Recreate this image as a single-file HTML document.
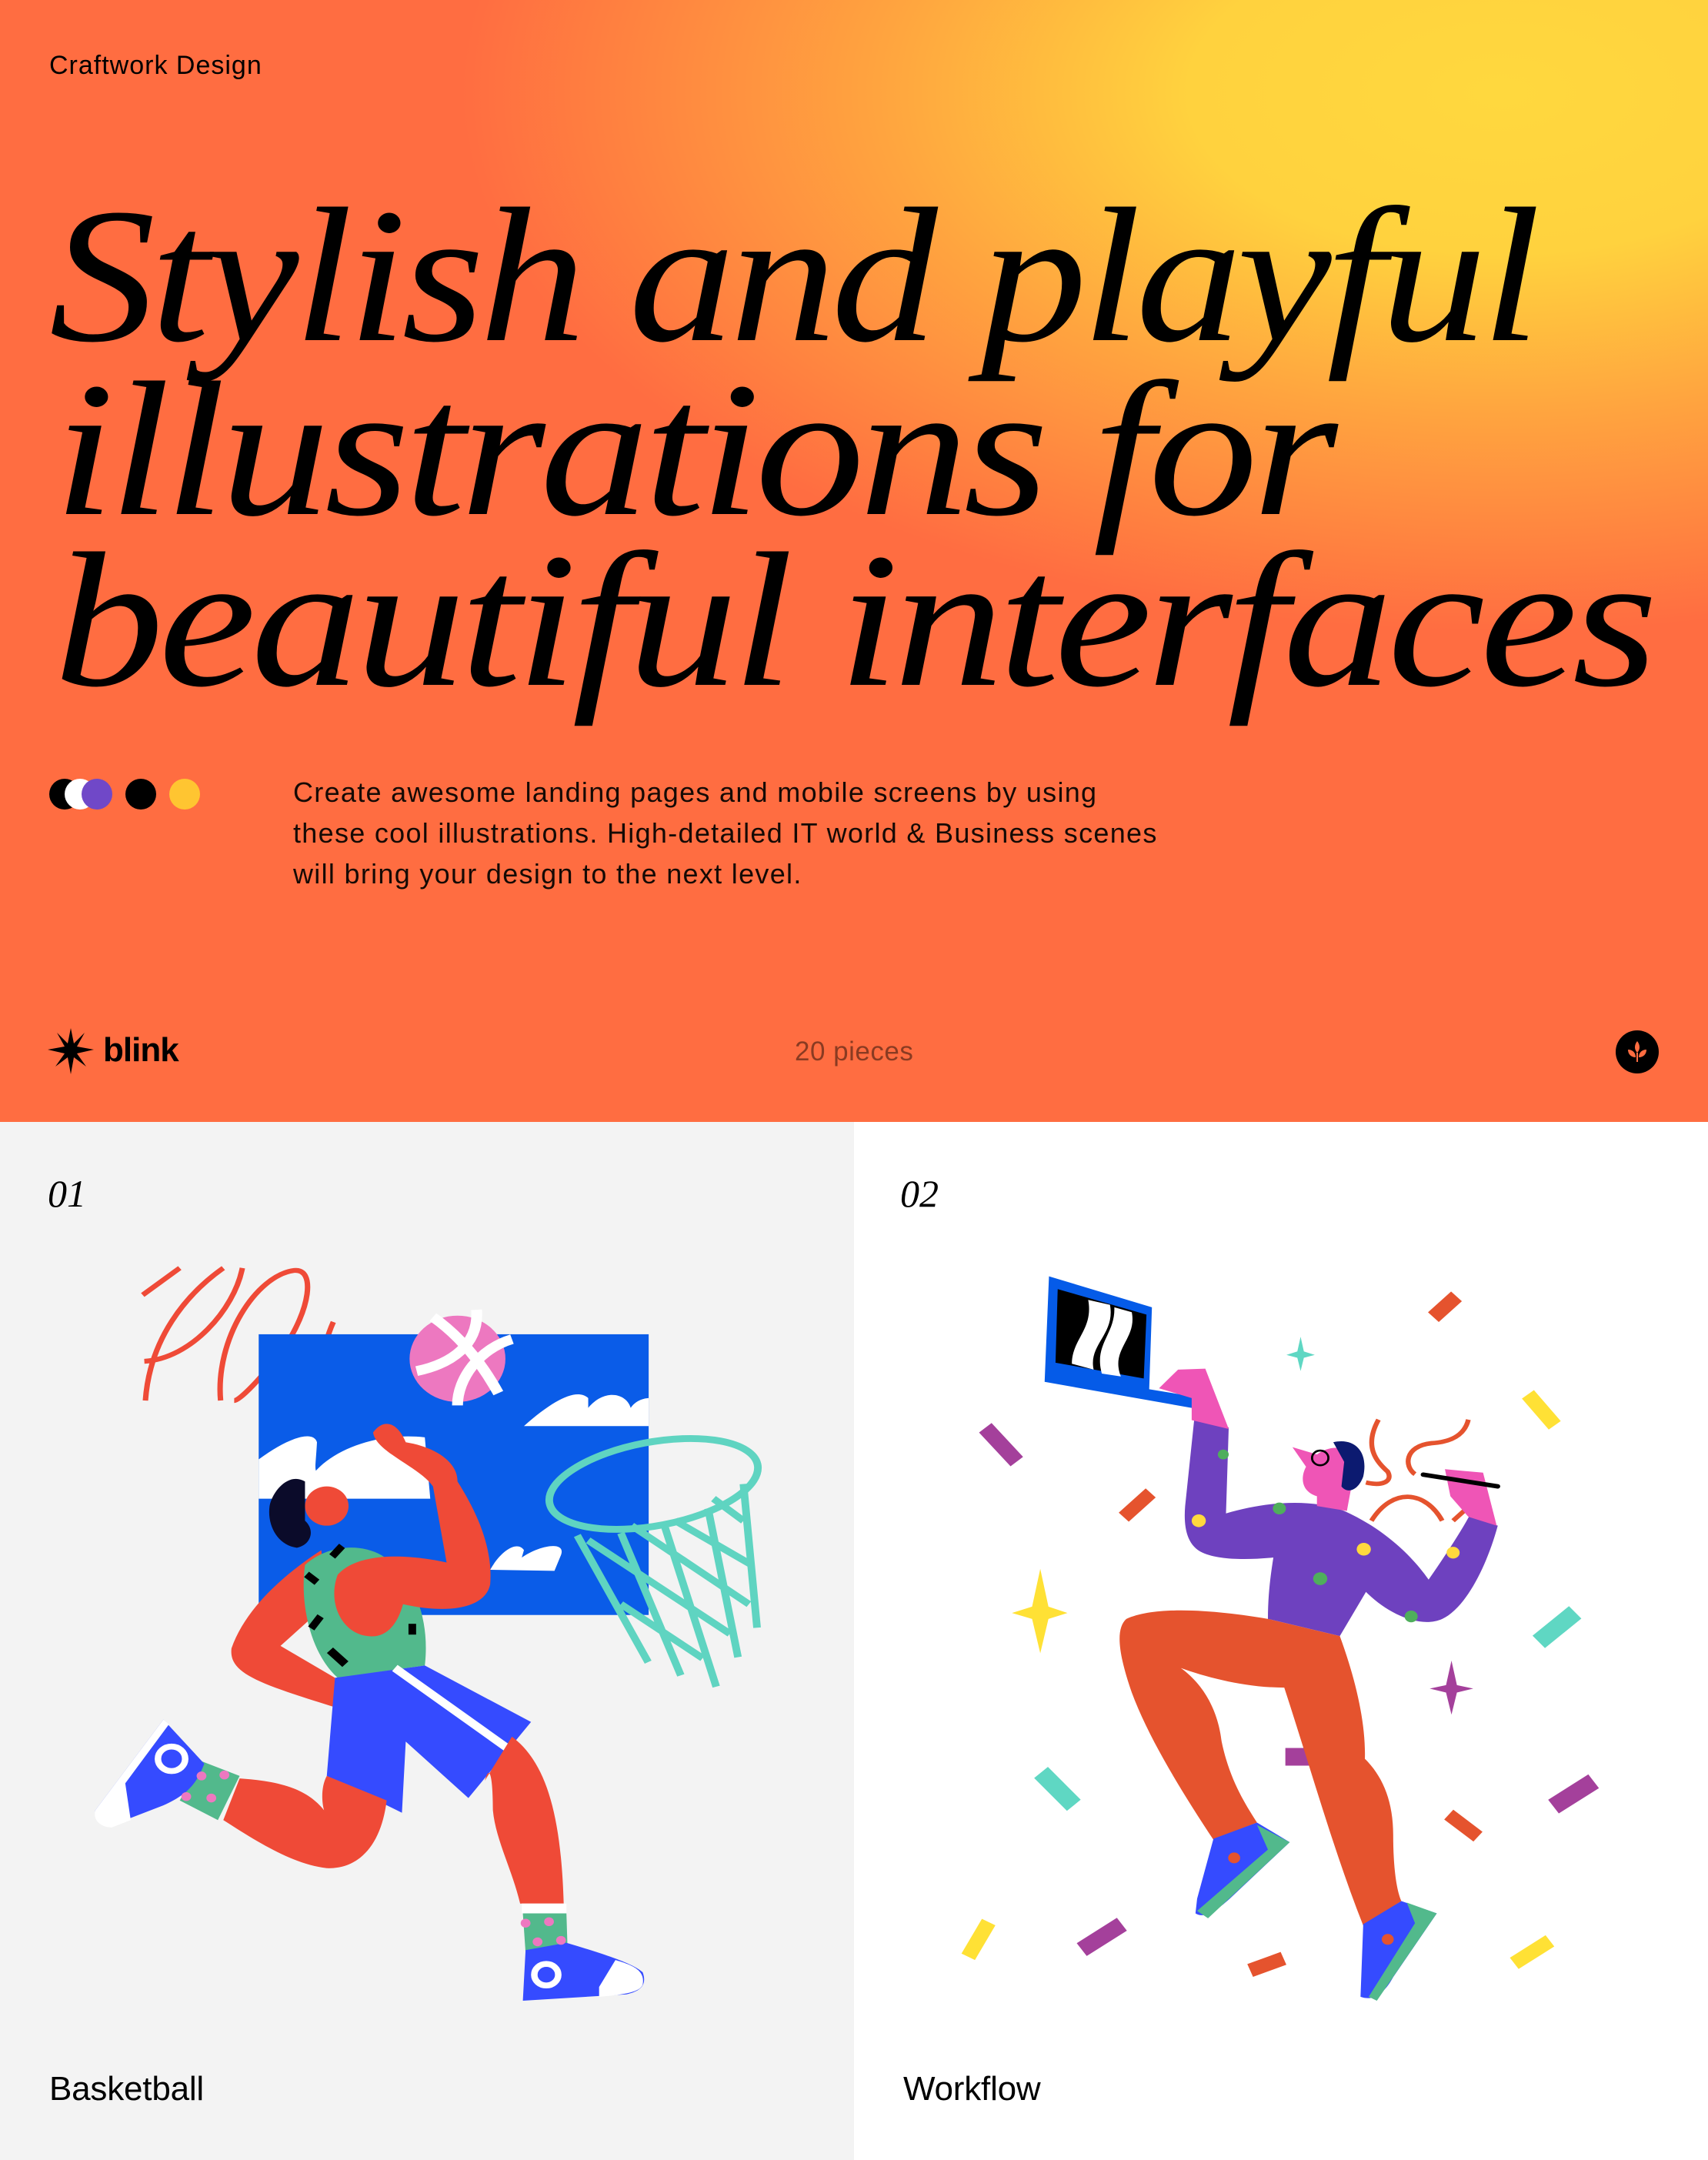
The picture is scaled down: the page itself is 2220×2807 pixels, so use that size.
<!DOCTYPE html>
<html><head><meta charset="utf-8">
<style>
*{margin:0;padding:0;box-sizing:border-box}
html,body{width:2220px;height:2807px;overflow:hidden;font-family:"Liberation Sans",sans-serif;color:#000}
#hero{position:absolute;left:0;top:0;width:2220px;height:1458px;
background:radial-gradient(ellipse 1350px 700px at 1950px 120px,#ffd83e 0%,#ffd23e 30%,#ffa43f 60%,rgba(255,110,65,0) 100%),#ff6d41;}
.abs{position:absolute;white-space:nowrap}
.h{font-family:"Liberation Serif",serif;font-style:italic;font-size:250px;line-height:1;transform-origin:0 0;letter-spacing:-6px}
.p{font-size:36px;line-height:53px;color:#150a05;letter-spacing:1.3px}
.dot{position:absolute;width:40px;height:40px;border-radius:50%;top:1012px}
#left{position:absolute;left:0;top:1458px;width:1110px;height:1349px;background:#f3f3f3}
#right{position:absolute;left:1110px;top:1458px;width:1110px;height:1349px;background:#fff}
.num{font-family:"Liberation Serif",serif;font-style:italic;font-size:50px}
.lab{font-size:44px;letter-spacing:-0.2px}
</style></head><body>
<div id="hero">
<div class="abs" style="left:64px;top:66px;font-size:34px;letter-spacing:1px">Craftwork Design</div>
<div class="abs h" id="l1" data-w="1932" style="left:64px;top:234px">Stylish and playful</div>
<div class="abs h" id="l2" data-w="1662" style="left:70px;top:460px">illustrations for</div>
<div class="abs h" id="l3" data-w="2078" style="left:70px;top:682px">beautiful interfaces</div>

<div class="dot" style="left:64px;background:#000"></div>
<div class="dot" style="left:84px;background:#fff"></div>
<div class="dot" style="left:106px;background:#7048c8"></div>
<div class="dot" style="left:163px;background:#000"></div>
<div class="dot" style="left:220px;background:#ffc531"></div>

<div class="abs p" style="left:381px;top:1003px">Create awesome landing pages and mobile screens by using<br>these cool illustrations. High-detailed IT world &amp; Business scenes<br>will bring your design to the next level.</div>

<svg class="abs" style="left:62px;top:1336px" width="60" height="60" viewBox="0 0 60 60">
<polygon fill="#000" points="30,0 34,20 48,6 38,24 60,28 38,33 50,50 34,38 30,60 26,38 10,50 22,33 0,28 22,24 12,6 26,20"/></svg>
<div class="abs" style="left:134px;top:1340px;font-size:44px;font-weight:bold;letter-spacing:-1px">blink</div>
<div class="abs" style="left:1033px;top:1347px;font-size:35px;color:#8a3b22;letter-spacing:0.5px">20 pieces</div>
<svg class="abs" style="left:2099px;top:1338px" width="58" height="58" viewBox="0 0 58 58">
<circle cx="29" cy="29" r="28" fill="#000"/>
<path d="M29 15 C33 20 33 26 29 30 C25 26 25 20 29 15Z" fill="#ff6d41"/>
<path d="M17 26 C23 26 27 30 27 36 C21 36 17 32 17 26Z" fill="#ff6d41"/>
<path d="M41 26 C35 26 31 30 31 36 C37 36 41 32 41 26Z" fill="#ff6d41"/>
<rect x="28" y="30" width="2" height="12" fill="#ff6d41"/></svg>
</div>

<div id="left">
<div class="abs num" style="left:62px;top:64px">01</div>
<div class="abs lab" style="left:64px;top:1232px">Basketball</div>
</div>
<div id="right">
<div class="abs num" style="left:60px;top:64px">02</div>
<div class="abs lab" style="left:64px;top:1232px">Workflow</div>
</div>

<!-- basketball -->
<svg class="abs" style="left:0;top:1600px" width="1110" height="1000" viewBox="0 0 1568 1568" preserveAspectRatio="none">
<g fill="none" stroke="#ef4a37" stroke-width="10">
<path d="M262 130 L330 75"/><path d="M267 345 C275 220 340 130 410 75"/><path d="M265 265 C350 260 430 160 445 75"/>
<path d="M405 345 C395 220 470 90 540 80 C580 75 570 160 520 240 C480 300 440 345 430 345"/>
<path d="M612 185 C590 240 585 300 605 345"/>
</g>
<rect x="475" y="210" width="716" height="572" fill="#0a5ce8"/>
<path d="M962 397 C1020 340 1060 320 1080 340 L1080 360 C1110 320 1150 330 1158 360 C1170 340 1191 340 1191 340 L1191 397Z" fill="#fff"/>
<path d="M475 465 C530 420 575 405 582 430 C580 470 578 480 580 488 C620 440 700 410 780 420 L790 545 L475 545Z" fill="#fff"/>
<path d="M900 690 C920 650 950 630 962 650 L958 665 C990 640 1040 630 1030 660 L1018 692Z" fill="#fff"/>
<circle cx="840" cy="260" r="88" fill="#ed78c0"/>
<g stroke="#fff" stroke-width="20" fill="none"><path d="M795 175 C840 210 880 260 915 330"/><path d="M765 285 C830 270 880 230 875 160"/><path d="M840 355 C840 300 880 240 940 220"/></g>
<g fill="none" stroke="#5fd4c1" stroke-width="14">
<ellipse cx="1200" cy="515" rx="195" ry="85" transform="rotate(-12 1200 515)"/>
<path d="M1060 620 L1190 878 M1140 615 L1250 905 M1220 600 L1315 928 M1300 565 L1355 868 M1365 515 L1390 808 M1080 630 L1340 820 M1160 600 L1375 760 M1240 590 L1380 680 M1310 545 L1365 590 M1140 760 L1290 870"/>
</g>
<path d="M590 650 C520 700 450 770 425 850 C420 900 470 920 615 970 L615 910 L515 845 L600 760Z" fill="#ef4a37"/>
<path d="M560 680 C600 640 660 635 700 660 C760 700 790 790 780 885 L620 910 C570 860 550 760 560 680Z" fill="#52b98c"/>
<g fill="#000"><rect x="560" y="700" width="25" height="14" transform="rotate(40 572 707)"/><rect x="565" y="790" width="30" height="14" transform="rotate(-55 580 797)"/><rect x="600" y="860" width="40" height="16" transform="rotate(45 620 868)"/><rect x="605" y="645" width="28" height="14" transform="rotate(-50 619 652)"/><rect x="750" y="800" width="14" height="22"/></g>
<path d="M620 700 C660 650 760 660 820 675 L795 520 C770 480 690 450 685 410 C705 380 730 390 745 430 C800 440 840 470 840 510 C880 580 905 650 900 720 C890 770 820 780 740 760 C730 800 710 830 675 825 C630 820 600 760 620 700Z" fill="#ef4a37"/>
<circle cx="600" cy="560" r="40" fill="#ef4a37"/>
<path d="M560 510 C530 490 500 530 495 560 C490 600 510 640 545 645 C570 640 580 610 560 590Z" fill="#0b0b2a"/>
<path d="M615 910 L780 885 L975 1000 L860 1155 L745 1040 L738 1185 L600 1110 Z" fill="#354bff"/>
<path d="M725 890 L940 1060" stroke="#fff" stroke-width="16"/>
<path d="M600 1110 C590 1130 590 1160 595 1180 C560 1130 500 1120 440 1115 L410 1200 C480 1250 540 1290 600 1298 C660 1300 700 1250 710 1160Z" fill="#ef4a37"/>
<path d="M940 1030 C1000 1080 1030 1180 1035 1370 L955 1370 C940 1300 910 1240 905 1180 C905 1120 900 1080 890 1120Z" fill="#ef4a37"/>
<path d="M370 1080 L440 1110 L400 1200 L330 1160Z" fill="#52b98c"/>
<path d="M300 995 L375 1085 C360 1130 340 1150 300 1170 L230 1200 C200 1220 170 1210 175 1180Z" fill="#354bff"/>
<path d="M175 1180 L300 995 L310 1005 L230 1125 L240 1200 L205 1215 C185 1215 170 1200 175 1180Z" fill="#fff"/>
<circle cx="315" cy="1075" r="25" fill="none" stroke="#fff" stroke-width="12"/>
<rect x="958" y="1370" width="82" height="20" fill="#fff"/>
<path d="M960 1390 L1040 1390 L1042 1460 L965 1470Z" fill="#52b98c"/>
<path d="M965 1465 L1040 1450 C1100 1470 1160 1490 1180 1510 C1190 1540 1170 1550 1150 1555 L960 1568Z" fill="#354bff"/>
<path d="M1100 1540 L1130 1485 C1160 1495 1185 1505 1180 1535 C1175 1550 1150 1555 1100 1560Z" fill="#fff"/>
<circle cx="1003" cy="1515" r="22" fill="none" stroke="#fff" stroke-width="12"/>
<g fill="#ed78c0"><circle cx="370" cy="1110" r="9"/><circle cx="412" cy="1108" r="9"/><circle cx="342" cy="1152" r="9"/><circle cx="388" cy="1155" r="9"/><circle cx="965" cy="1410" r="9"/><circle cx="1008" cy="1407" r="9"/><circle cx="987" cy="1448" r="9"/><circle cx="1030" cy="1445" r="9"/></g>
</svg>

<!-- workflow -->
<svg class="abs" style="left:1110px;top:1600px" width="1110" height="1000" viewBox="0 0 1568 1568" preserveAspectRatio="none">
<path d="M358 92 L547 155 L542 322 L640 340 L630 362 L350 307Z" fill="#055be8"/>
<path d="M374 118 L537 170 L532 300 L370 268Z" fill="#000"/>
<path d="M430 140 C440 200 400 220 400 270 L440 282 C430 230 480 210 470 150Z M478 155 C480 210 440 230 455 290 L490 296 C470 240 520 220 510 165Z" fill="#fff"/>
<g>
<rect x="1055" y="140" width="60" height="28" fill="#e5532e" transform="rotate(-45 1085 154)"/>
<rect x="1222" y="350" width="80" height="28" fill="#ffe135" transform="rotate(52 1262 364)"/>
<rect x="225" y="420" width="90" height="30" fill="#a4409b" transform="rotate(50 270 435)"/>
<rect x="485" y="545" width="70" height="26" fill="#e5532e" transform="rotate(-45 520 558)"/>
<rect x="1245" y="790" width="90" height="34" fill="#5fd7c3" transform="rotate(-42 1290 806)"/>
<rect x="330" y="1120" width="90" height="34" fill="#5fd7c3" transform="rotate(48 375 1135)"/>
<rect x="1275" y="1130" width="90" height="34" fill="#a4409b" transform="rotate(-35 1320 1145)"/>
<rect x="1085" y="1195" width="70" height="26" fill="#e5532e" transform="rotate(40 1115 1208)"/>
<rect x="195" y="1430" width="80" height="28" fill="#ffe135" transform="rotate(-62 231 1449)"/>
<rect x="410" y="1422" width="90" height="32" fill="#a4409b" transform="rotate(-35 455 1438)"/>
<rect x="725" y="1480" width="66" height="28" fill="#e5532e" transform="rotate(-22 758 1494)"/>
<rect x="1205" y="1455" width="80" height="28" fill="#ffe135" transform="rotate(-35 1245 1469)"/>
<rect x="792" y="1053" width="60" height="36" fill="#a4409b"/>
</g>
<path d="M342 688 L357 765 L392 778 L357 790 L342 860 L327 790 L290 778 L327 765Z" fill="#ffe135"/>
<path d="M820 215 L826 245 L846 252 L826 258 L820 285 L814 258 L794 252 L814 245Z" fill="#5fd7c3"/>
<path d="M1097 875 L1107 925 L1137 932 L1107 940 L1097 985 L1087 940 L1057 932 L1087 925Z" fill="#a4409b"/>
<g fill="none" stroke="#e5532e" stroke-width="9"><path d="M963 384 C935 440 960 470 980 490 C990 510 970 520 940 512"/><path d="M1128 384 C1120 420 1090 430 1060 432 C1010 438 1010 480 1030 495"/><path d="M950 590 C990 520 1050 530 1080 590"/><path d="M1100 590 L1120 570"/></g>
<path d="M625 380 L688 400 L683 575 C760 550 840 545 900 570 C980 610 1030 670 1055 710 C1080 670 1110 620 1130 580 L1182 600 C1160 690 1120 770 1080 790 C1040 810 980 780 940 735 L892 825 L760 790 C760 740 765 700 770 665 C720 670 670 670 640 655 C610 640 605 600 608 560Z" fill="#6e41bf"/>
<g fill="#ffd93d"><circle cx="633" cy="590" r="13"/><circle cx="936" cy="648" r="13"/><circle cx="1100" cy="655" r="12"/></g>
<g fill="#4fae5c"><circle cx="856" cy="708" r="13"/><circle cx="781" cy="565" r="12"/><circle cx="1023" cy="785" r="12"/><circle cx="678" cy="455" r="10"/></g>
<path d="M620 385 L688 403 L645 280 L595 282 L560 320 L620 340Z" fill="#ef55b6"/>
<path d="M805 440 L850 455 C880 430 920 440 920 480 L905 570 L850 560 L850 540 C820 530 820 500 830 480Z" fill="#ef55b6"/>
<path d="M880 430 C920 420 945 450 935 500 C925 530 905 535 895 520 L900 470Z" fill="#0c1a70"/>
<circle cx="856" cy="462" r="15" fill="none" stroke="#000" stroke-width="4"/>
<path d="M1085 485 L1155 492 L1180 600 L1128 582 L1095 540Z" fill="#ef55b6"/>
<path d="M1045 496 L1182 520" stroke="#000" stroke-width="9" stroke-linecap="round"/>
<path d="M500 790 C560 760 680 775 760 790 L892 825 C920 910 940 1000 938 1075 C970 1110 990 1160 990 1230 C990 1290 995 1340 1005 1365 L935 1415 C880 1260 840 1100 790 930 C720 930 650 910 600 890 C650 930 670 990 675 1040 C690 1120 720 1170 740 1205 L660 1240 C600 1140 540 1030 510 940 C485 860 480 810 500 790Z" fill="#e5532e"/>
<path d="M660 1238 L740 1205 L800 1245 L690 1360 C660 1390 640 1400 627 1390 L630 1360Z" fill="#354bff"/>
<path d="M740 1210 L800 1245 L650 1400 L630 1385 L760 1260Z" fill="#52b98c"/>
<circle cx="698" cy="1277" r="11" fill="#e5532e"/>
<path d="M935 1412 L1005 1365 L1070 1390 L990 1520 C970 1560 950 1568 930 1560Z" fill="#354bff"/>
<path d="M1015 1368 L1070 1390 L960 1568 L945 1560 L1030 1410Z" fill="#52b98c"/>
<circle cx="980" cy="1443" r="11" fill="#e5532e"/>
</svg>

<script>
['l1','l2','l3'].forEach(function(id){var e=document.getElementById(id);var w=e.getBoundingClientRect().width;var t=+e.getAttribute('data-w');if(w>0)e.style.transform='scaleX('+(t/w)+')';});
</script>
</body></html>
